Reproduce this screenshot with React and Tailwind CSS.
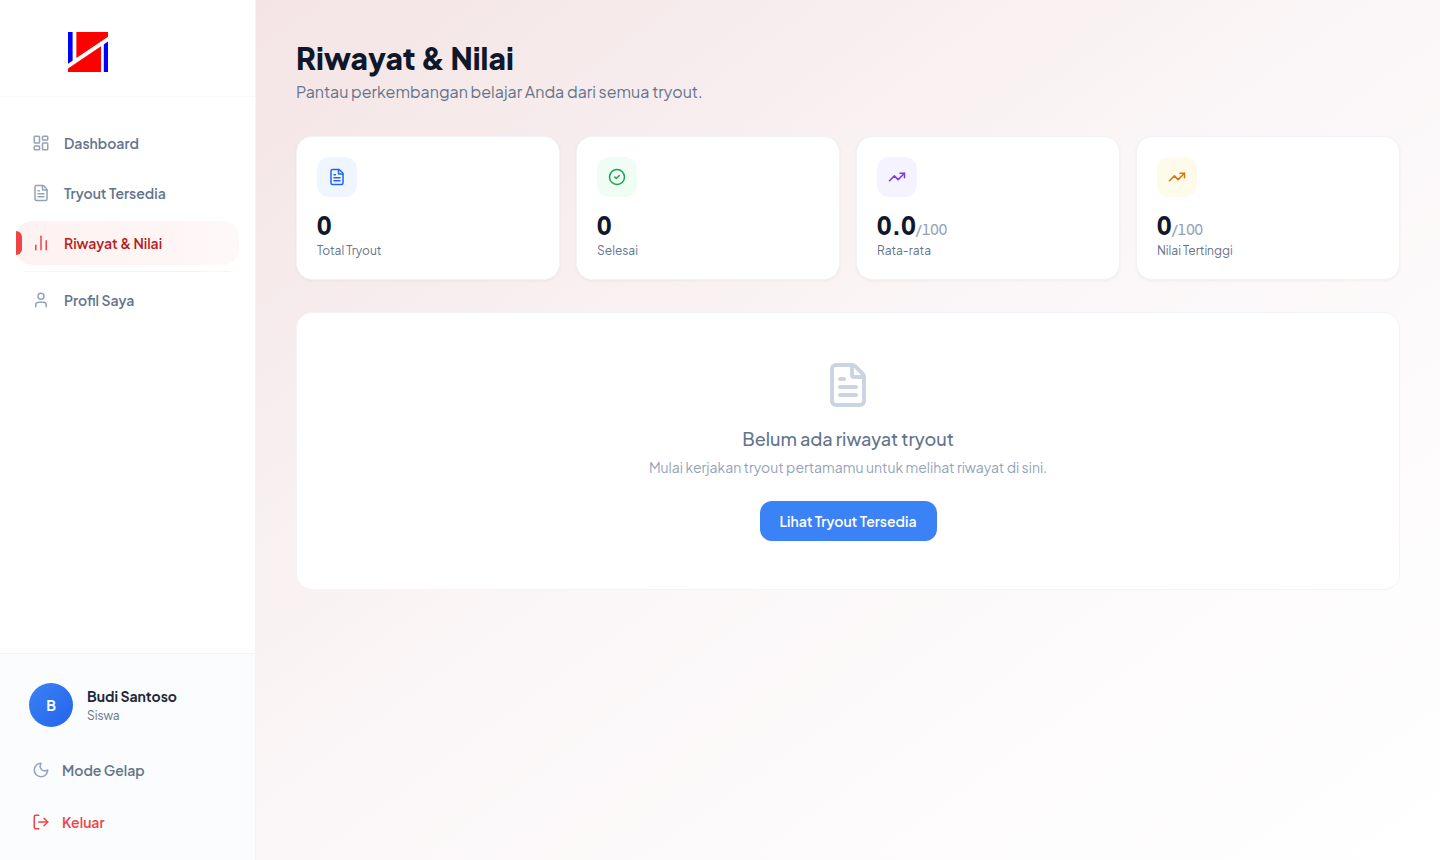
import React from "react";
import {
  LayoutDashboard,
  FileText,
  User,
  Moon,
  LogOut,
  CircleCheck,
  TrendingUp,
  ChartNoAxesColumn,
} from "lucide-react";

const navItems = [
  { label: "Dashboard", icon: LayoutDashboard },
  { label: "Tryout Tersedia", icon: FileText },
  { label: "Riwayat & Nilai", icon: ChartNoAxesColumn, active: true },
];

const stats = [
  {
    label: "Total Tryout",
    value: "0",
    icon: FileText,
    box: "bg-[#eff6ff] text-[#2563eb]",
  },
  {
    label: "Selesai",
    value: "0",
    icon: CircleCheck,
    box: "bg-[#f0fdf4] text-[#16a34a]",
  },
  {
    label: "Rata-rata",
    value: "0.0",
    suffix: "/100",
    icon: TrendingUp,
    box: "bg-[#f5f3ff] text-[#7c3aed]",
  },
  {
    label: "Nilai Tertinggi",
    value: "0",
    suffix: "/100",
    icon: TrendingUp,
    box: "bg-[#fffbeb] text-[#d97706]",
  },
];

const Logo = () => (
  <svg viewBox="0 0 40 40" className="size-10" role="img" aria-label="Logo">
    <path d="M0 0h4.6v28.7L0 31.8z" fill="#0000ff" />
    <path d="M8.4 0H40v4.8L8.4 26z" fill="#ff0000" />
    <path d="M0 36.6 33 14.2V40H0z" fill="#ff0000" />
    <path d="M35.8 12.4 40 9.5V40h-4.2z" fill="#0000ff" />
  </svg>
);

const NavItem = ({ label, icon: Icon, active }) => {
  return (
    <a
      href="#"
      aria-current={active ? "page" : undefined}
      className={`relative flex h-11 items-center gap-[14px] rounded-2xl px-4 text-sm font-semibold ${
        active
          ? "bg-linear-to-r from-[#fef1f1] to-[#fef8f8] text-[#b91c1c]"
          : "text-[#64748b]"
      }`}
    >
      {active && (
        <span className="absolute top-[10px] left-0 h-6 w-[6px] rounded-r-md bg-[#ef4444]" />
      )}
      <Icon size={18} className={active ? "text-[#ef4444]" : "text-[#94a3b8]"} />
      {label}
    </a>
  );
};

const Sidebar = () => (
  <aside className="flex w-64 shrink-0 flex-col border-r border-[#f1f5f9] bg-white">
    <div className="flex h-[97px] items-center border-b border-[#f8fafc] pt-2 pl-[68px]">
      <Logo />
    </div>

    <nav className="flex flex-1 flex-col px-4 pt-6">
      <div className="flex flex-col gap-[6px]">
        {navItems.map((item) => (
          <NavItem key={item.label} {...item} />
        ))}
      </div>
      <hr className="mx-2 my-[6px] border-[#f1f5f9]" />
      <NavItem label="Profil Saya" icon={User} />
    </nav>

    <div className="flex flex-col border-t border-[#f1f5f9] bg-[#fbfcfe] px-4 pt-[29px] pb-4">
      <div className="flex items-center gap-[14px] pl-[13px]">
        <div className="flex size-11 items-center justify-center rounded-full bg-linear-135 from-[#3b82f6] to-[#2563eb] text-sm font-bold text-white">
          B
        </div>
        <div>
          <p className="text-sm leading-[21px] font-bold text-[#1e293b]">Budi Santoso</p>
          <p className="text-xs leading-[18px] text-[#64748b]">Siswa</p>
        </div>
      </div>
      <button
        type="button"
        className="mt-[21px] flex h-11 items-center gap-3 px-4 text-sm font-semibold text-[#64748b]"
      >
        <Moon size={18} className="text-[#94a3b8]" />
        Mode Gelap
      </button>
      <button
        type="button"
        className="mt-2 flex h-11 items-center gap-3 px-4 text-sm font-semibold text-[#ef4444]"
      >
        <LogOut size={18} />
        Keluar
      </button>
    </div>
  </aside>
);

const StatCard = ({ label, value, suffix, icon: Icon, box }) => (
  <div className="rounded-2xl border border-[#f1f5f9] bg-white p-5 shadow-[0_1px_3px_rgba(0,0,0,0.05)]">
    <div className={`flex size-10 items-center justify-center rounded-xl ${box}`}>
      <Icon size={18} />
    </div>
    <p className="mt-3 text-2xl leading-8 font-extrabold text-[#0f172a] tabular-nums">
      {value}
      {suffix && (
        <span className="text-sm leading-none font-medium text-[#94a3b8]">{suffix}</span>
      )}
    </p>
    <p className="mt-[2px] text-xs leading-4 text-[#64748b]">{label}</p>
  </div>
);

const App = () => {
  return (
    <div className="flex min-h-screen bg-white font-['Plus_Jakarta_Sans',Inter,sans-serif]">
      <Sidebar />
      <main className="min-w-0 flex-1 bg-linear-to-br from-[#f4e4e5] via-[#fbf7f8] to-white p-10">
        <h1 className="text-3xl leading-9 font-extrabold text-[#0f172a]">
          Riwayat & Nilai
        </h1>
        <p className="mt-1 text-base text-[#64748b]">
          Pantau perkembangan belajar Anda dari semua tryout.
        </p>

        <div className="mt-8 grid grid-cols-4 gap-4">
          {stats.map((stat) => (
            <StatCard key={stat.label} {...stat} />
          ))}
        </div>

        <section className="mt-8 flex flex-col items-center rounded-2xl border border-[#f1f5f9] bg-white py-12">
          <FileText size={48} className="text-[#cbd5e1]" />
          <h2 className="mt-4 text-lg leading-7 font-medium text-[#64748b]">
            Belum ada riwayat tryout
          </h2>
          <p className="mt-1 text-sm text-[#94a3b8]">
            Mulai kerjakan tryout pertamamu untuk melihat riwayat di sini.
          </p>
          <button
            type="button"
            className="mt-6 h-10 rounded-xl bg-[#3b82f6] px-5 text-sm font-semibold text-white"
          >
            Lihat Tryout Tersedia
          </button>
        </section>
      </main>
    </div>
  );
};

export default App;
